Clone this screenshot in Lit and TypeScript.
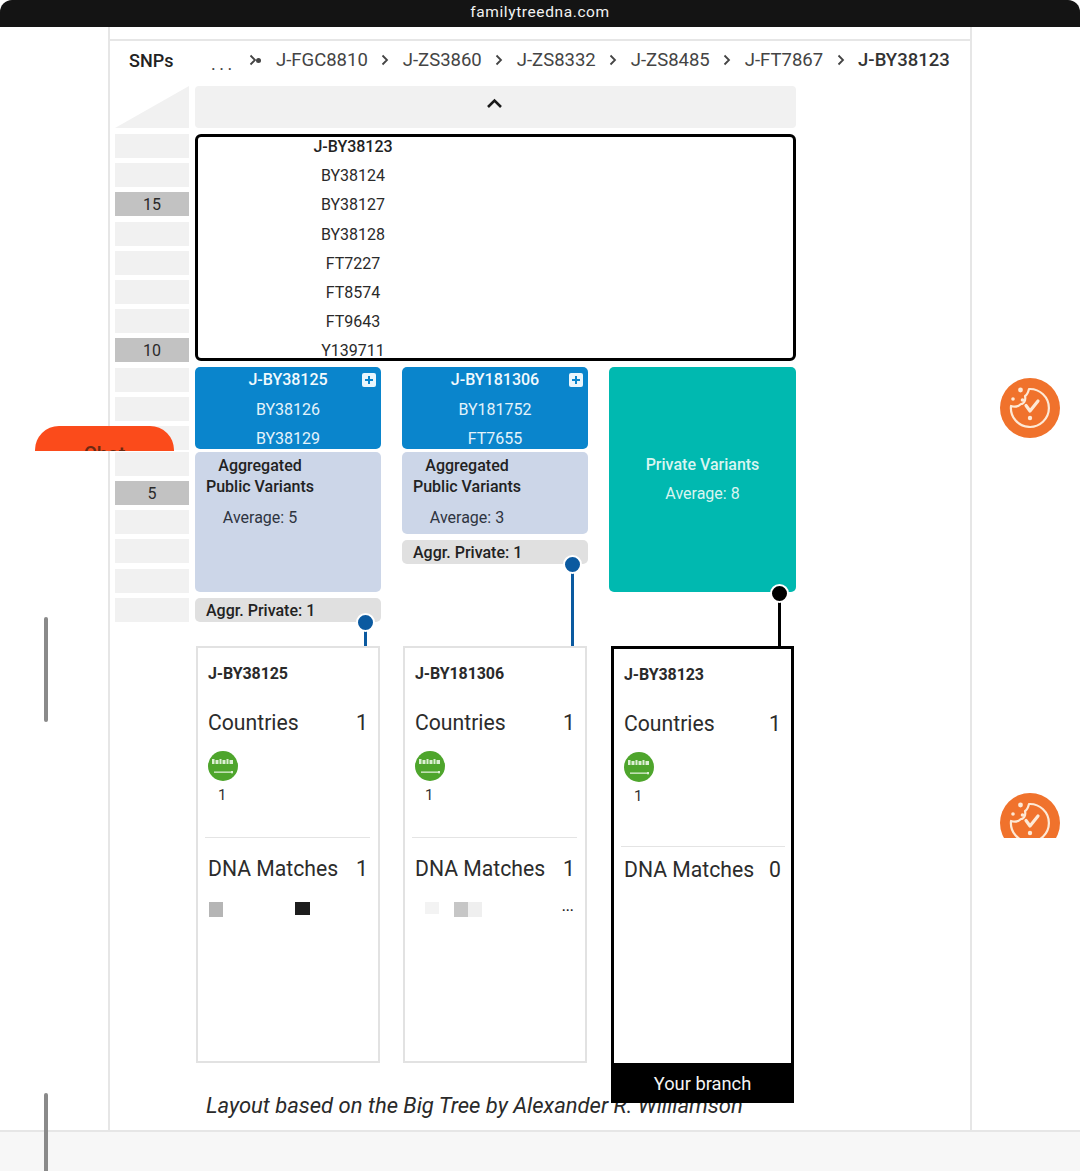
import { LitElement, html, css } from "lit";
import { customElement } from "lit/decorators.js";

const chev = html`<svg class="chev" width="8" height="12" viewBox="0 0 8 12"><path d="M1.5 1.5 6 6l-4.500 4.500" fill="none" stroke="#444" stroke-width="1.800"/></svg>`;

const flag = html`<svg class="flag" width="30" height="30" viewBox="0 0 30 30">
  <circle cx="15" cy="15" r="15" fill="#4ea52c"/>
  <g fill="#dcefd3">
    <rect x="4" y="8" width="2.500" height="5"/><rect x="7.500" y="9" width="3" height="4"/><rect x="11.500" y="8" width="2" height="5"/>
    <rect x="14.500" y="9" width="3" height="4"/><rect x="18.500" y="8" width="2" height="5"/><rect x="21.500" y="9" width="3.500" height="4"/>
    <rect x="6" y="20.500" width="17" height="1.300"/><rect x="23" y="20" width="2" height="2.300"/>
  </g>
</svg>`;

const cookie = html`<svg width="60" height="60" viewBox="-30 -30 60 60">
  <circle r="30" fill="#f0722c"/>
  <g fill="none" stroke="#fde9d6" stroke-width="2.200" stroke-linecap="round" stroke-linejoin="round">
    <path d="M-19 -2A19 19 0 1 0 -1 -19C-2 -15 -3 -13 -5 -12C-4 -8 -6 -4 -9 -4C-12 -1 -16 -1 -19 -2Z"/>
    <path d="M-4 -2.500 0 3 8 -7" stroke-width="3.200"/>
  </g>
  <g fill="#fde9d6"><circle cx="0" cy="10" r="2.200"/><circle cx="-9.500" cy="-18" r="2.400"/><circle cx="-17" cy="-9" r="1.800"/><circle cx="-7.500" cy="-8" r="1.800"/></g>
</svg>`;

const rulerMarks: Record<number, string> = { 2: "15", 7: "10", 12: "5" };

interface Branch {
  name: string; a: string; b: string; avg: number; tall: boolean; thumbs: unknown;
}

const thumbsA = html`<div class="thumbs"><i class="th" style="left:1px;width:14px;height:15px;background:#b5b5b5"></i><i class="th" style="left:87px;width:15px;height:13px;background:#1d1d1d"></i></div>`;
const thumbsB = html`<div class="thumbs"><i class="th" style="left:10px;width:14px;height:12px;background:#f3f3f3"></i><i class="th" style="left:39px;width:14px;height:15px;background:#c6c6c6"></i><i class="th" style="left:53px;width:14px;height:15px;background:#efefef"></i><span class="more">...</span></div>`;

const branches: Branch[] = [
  { name: "J-BY38125", a: "BY38126", b: "BY38129", avg: 5, tall: true, thumbs: thumbsA },
  { name: "J-BY181306", a: "BY181752", b: "FT7655", avg: 3, tall: false, thumbs: thumbsB },
];

@customElement("app-root")
export class AppRoot extends LitElement {
  static styles = css`
    :host { display: block; position: relative; width: 1080px; height: 1171px; overflow: hidden; background: #fff; font-family: Roboto, "Liberation Sans", sans-serif; color: #222; }
    .topbar { height: 27px; background: #141414; color: #f2f2f2; border-radius: 12px 12px 0 0; display: flex; align-items: center; justify-content: center; font-size: 15.500px; letter-spacing: 0.600px; padding-bottom: 3px; box-sizing: border-box; }
    .panel { margin-left: 108px; width: 864px; height: 1103px; box-sizing: border-box; border-left: 2px solid #e6e6e6; border-right: 2px solid #e6e6e6; position: relative; }
    .rule { height: 12px; border-bottom: 2px solid #e6e6e6; }
    .crumbs { height: 38px; display: flex; align-items: center; padding-left: 19px; color: #444; font-size: 18.500px; white-space: nowrap; }
    .snps { width: 82px; color: #222; font-weight: 500; font-size: 18px; }
    .dots { width: 38px; font-size: 18px; letter-spacing: 3.500px; position: relative; top: 3px; }
    .lead { display: flex; align-items: center; width: 27px; }
    .lead i { width: 5px; height: 5px; border-radius: 50%; background: #444; margin-left: -1px; }
    .crumb-list { display: flex; align-items: center; gap: 13.500px; }
    .chev { flex: none; }
    .crumb-list b { font-weight: 500; color: #333; }
    .body { display: flex; padding: 7px 0 0 5px; gap: 6px; }
    .ruler { width: 74px; display: flex; flex-direction: column; }
    .corner { width: 74px; height: 42px; background: #f1f1f1; clip-path: polygon(100% 0, 100% 100%, 0 100%); margin-bottom: 6px; }
    .mark { height: 24px; margin-bottom: 5.200px; background: #f1f1f1; display: flex; align-items: center; justify-content: center; font-size: 16px; color: #2a2a2a; }
    .mark.on { background: #c2c2c2; }
    .mark.cut { margin-bottom: 2px; }
    .main { width: 601px; display: flex; flex-direction: column; }
    .up { height: 42px; background: #f1f1f1; border-radius: 4px; display: flex; align-items: center; justify-content: center; margin-bottom: 6px; padding: 0 2px 7px 0; box-sizing: border-box; }
    .snpbox { height: 227px; box-sizing: border-box; border: 3px solid #000; border-radius: 6px; overflow: hidden; margin-bottom: 6px; }
    .snplist { width: 310px; margin-top: -2px; display: flex; flex-direction: column; gap: 5.200px; text-align: center; }
    .snplist div { height: 24px; line-height: 24px; font-size: 16px; color: #2a2a2a; }
    .snplist div.head { font-weight: 500; color: #222; }
    .cols { display: flex; gap: 21px; }
    .col { width: 186px; height: 696px; display: flex; flex-direction: column; position: relative; }
    .col.wide { width: 187px; height: 699px; margin-bottom: -3px; }
    .blue { height: 82px; padding-top: 1px; box-sizing: border-box; background: #0a85cc; border-radius: 5px; overflow: hidden; color: #e3f3fb; position: relative; display: flex; flex-direction: column; gap: 5.700px; text-align: center; font-size: 16px; margin-bottom: 3px; }
    .blue div { height: 24px; line-height: 24px; flex: none; }
    .blue div.head { font-weight: 500; color: #f2fafd; }
    .plus { position: absolute; right: 5px; top: 6px; width: 14px; height: 14px; background: #eaf6fc; border-radius: 2px; display: block; }
    .agg { background: #ccd6e8; border-radius: 5px; padding: 3px 0 0 11px; box-sizing: border-box; }
    .agg.tall { height: 140px; }
    .agg.short { height: 82px; }
    .agg-inner { display: inline-block; text-align: center; font-size: 16px; line-height: 21px; }
    .agg-inner b { font-weight: 500; color: #222; display: block; margin-bottom: 10px; }
    .agg-inner span { color: #2e3440; }
    .priv { margin-top: 6px; height: 24px; overflow: hidden; background: #e0e0e0; border-radius: 5px; padding-left: 11px; line-height: 26px; font-size: 16px; font-weight: 500; color: #222; }
    .teal { height: 225px; background: #00b9b0; border-radius: 5px; color: #d9f5f1; text-align: center; padding-top: 86px; box-sizing: border-box; font-size: 16px; display: flex; flex-direction: column; gap: 5px; }
    .teal div { height: 24px; line-height: 24px; }
    .teal div.head { font-weight: 500; }
    .conn { flex: 1; min-height: 0; position: relative; }
    .conn::after { content: ""; position: absolute; left: 169px; top: 0; bottom: 0; width: 3px; background: var(--c); }
    .dot { position: absolute; z-index: 2; left: 162px; top: -8px; width: 15px; height: 15px; border-radius: 50%; background: var(--c); border: 2px solid #fff; box-sizing: content-box; margin: -1px 0 0 -1px; }
    .dot.k { top: -7px; }
    .card { margin: 0 1px; height: 417px; box-sizing: border-box; border: 2px solid #e2e2e2; padding: 0 10px; flex: none; position: relative; }
    .card h3 { margin: 0; padding-top: 16px; font-size: 16px; line-height: 20px; font-weight: 700; color: #2a2a2a; letter-spacing: -0.100px; }
    .stat { display: flex; justify-content: space-between; font-size: 21.200px; line-height: 28px; color: #2c2c2c; }
    .stat.c { margin-top: 25px; }
    .flag { display: block; margin-top: 14px; }
    .n { font-size: 15px; line-height: 20px; margin: 4px 0 0 10px; color: #333; }
    .sep { height: 1px; background: #e4e4e4; margin: 32px 0 17px -3px; width: 165px; }
    .thumbs { position: relative; height: 16px; margin-top: 19px; }
    .th { position: absolute; top: 0; display: block; }
    .more { position: absolute; right: 1px; top: -2px; font-size: 12px; line-height: 14px; color: #222; letter-spacing: 0.500px; font-weight: 700; }
    .card.me { margin: 0 2px; height: 420px; border: 3px solid #000; }
    .card.me .sep { margin: 40px 0 9px -3px; width: 164px; }
    .branch { position: absolute; z-index: 3; left: -3px; right: -3px; top: 414px; height: 40px; background: #000; color: #f4f4f4; text-align: center; font-size: 18.300px; line-height: 42px; }
    .note { margin: 30px 0 0 11px; font-style: italic; font-size: 22px; line-height: 26px; color: #2a2a2a; white-space: nowrap; position: relative; z-index: 1; }
    .foot { height: 41px; background: #f7f7f7; border-top: 2px solid #e6e6e6; box-sizing: border-box; }
    .chat { position: absolute; left: 35px; top: 426px; width: 139px; height: 25px; overflow: hidden; z-index: 5; }
    .chat div { width: 139px; height: 48px; background: #fb4b1b; border-radius: 24px; color: #6b2a14; text-align: center; font-size: 20px; line-height: 56px; font-weight: 500; }
    .scroll { position: absolute; left: 44px; width: 4px; background: #8a8a8a; border-radius: 2px; z-index: 5; }
    .s1 { top: 617px; height: 105px; }
    .s2 { top: 1093px; height: 90px; }
    .ck { position: absolute; left: 1000px; width: 60px; overflow: hidden; z-index: 5; }
    .ck1 { top: 378px; height: 60px; }
    .ck2 { top: 793px; height: 45px; }
  `;

  private card(name: string, dna: number, thumbs: unknown, me = false) {
    return html`<div class="card ${me ? "me" : ""}">
      <h3>${name}</h3>
      <div class="stat c"><span>Countries</span><span>1</span></div>
      ${flag}
      <div class="n">1</div>
      <div class="sep"></div>
      <div class="stat"><span>DNA Matches</span><span>${dna}</span></div>
      ${thumbs}
      ${me ? html`<div class="branch">Your branch</div>` : ""}
    </div>`;
  }

  render() {
    const marks = Array.from({ length: 17 }, (_, i) => i);
    const snps = ["BY38124", "BY38127", "BY38128", "FT7227", "FT8574", "FT9643", "Y139711"];
    const crumbs = ["J-FGC8810", "J-ZS3860", "J-ZS8332", "J-ZS8485", "J-FT7867"];
    return html`
      <div class="topbar">familytreedna.com</div>
      <div class="panel">
        <div class="rule"></div>
        <div class="crumbs">
          <span class="snps">SNPs</span>
          <span class="dots">...</span>
          <span class="lead">${chev}<i></i></span>
          <div class="crumb-list">
            ${crumbs.map((c) => html`<span>${c}</span>${chev}`)}
            <b>J-BY38123</b>
          </div>
        </div>
        <div class="body">
          <div class="ruler">
            <div class="corner"></div>
            ${marks.map((i) => html`<div class="mark ${rulerMarks[i] ? "on" : ""} ${i === 10 ? "cut" : ""}">${rulerMarks[i] ?? ""}</div>`)}
          </div>
          <div class="main">
            <div class="up"><svg width="17" height="11" viewBox="0 0 17 11"><path d="M2 9 8.500 2.500 15 9" fill="none" stroke="#1a1a1a" stroke-width="2.600"/></svg></div>
            <div class="snpbox"><div class="snplist">
              <div class="head">J-BY38123</div>
              ${snps.map((s) => html`<div>${s}</div>`)}
            </div></div>
            <div class="cols">
              ${branches.map((b) => html`<div class="col">
                <div class="blue">
                  <div class="head">${b.name}</div><div>${b.a}</div><div>${b.b}</div>
                  <svg class="plus" viewBox="0 0 14 14"><path d="M3 7h8M7 3v8" stroke="#0a85cc" stroke-width="2"/></svg>
                </div>
                <div class="agg ${b.tall ? "tall" : "short"}"><div class="agg-inner"><b>Aggregated<br />Public Variants</b><span>Average: ${b.avg}</span></div></div>
                <div class="priv">Aggr. Private: 1</div>
                <div class="conn" style="--c:#0b5aa0"><span class="dot"></span></div>
                ${this.card(b.name, 1, b.thumbs)}
              </div>`)}
              <div class="col wide">
                <div class="teal"><div class="head">Private Variants</div><div>Average: 8</div></div>
                <div class="conn" style="--c:#000"><span class="dot k"></span></div>
                ${this.card("J-BY38123", 0, "", true)}
              </div>
            </div>
            <div class="note">Layout based on the Big Tree by Alexander R. Williamson</div>
          </div>
        </div>
      </div>
      <div class="foot"></div>
      <div class="chat"><div>Chat</div></div>
      <div class="scroll s1"></div>
      <div class="scroll s2"></div>
      <div class="ck ck1">${cookie}</div>
      <div class="ck ck2">${cookie}</div>
    `;
  }
}
